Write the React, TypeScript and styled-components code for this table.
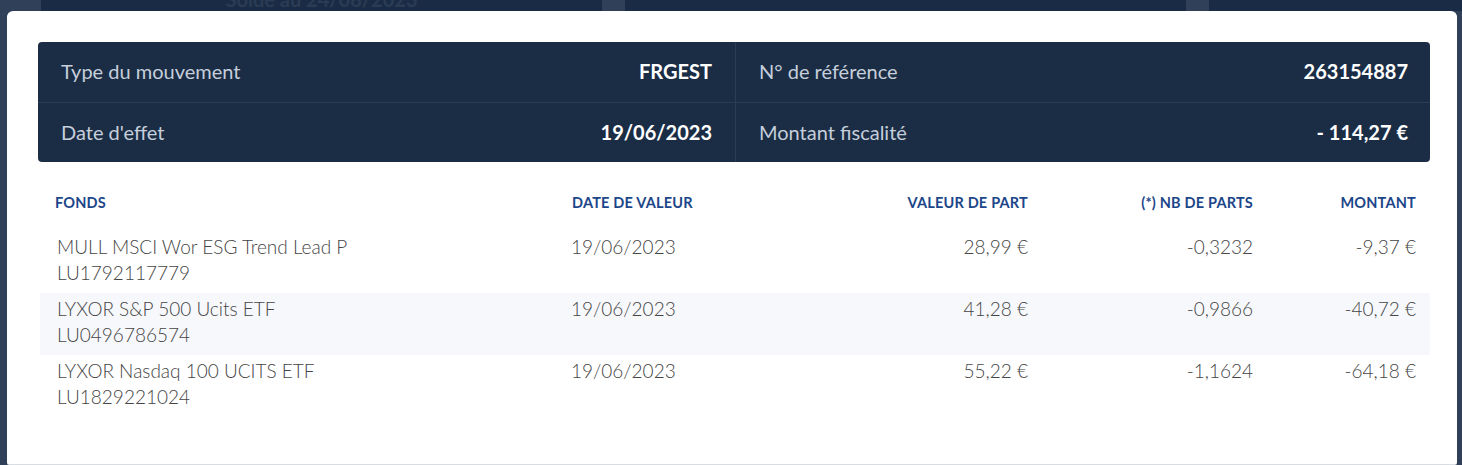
import styled, { createGlobalStyle } from 'styled-components';

type Fund = {
  name: string;
  isin: string;
  date: string;
  unitValue: string;
  units: string;
  amount: string;
};

const funds: Fund[] = [
  {
    name: 'MULL MSCI Wor ESG Trend Lead P',
    isin: 'LU1792117779',
    date: '19/06/2023',
    unitValue: '28,99 €',
    units: '-0,3232',
    amount: '-9,37 €'
  },
  {
    name: 'LYXOR S&P 500 Ucits ETF',
    isin: 'LU0496786574',
    date: '19/06/2023',
    unitValue: '41,28 €',
    units: '-0,9866',
    amount: '-40,72 €'
  },
  {
    name: 'LYXOR Nasdaq 100 UCITS ETF',
    isin: 'LU1829221024',
    date: '19/06/2023',
    unitValue: '55,22 €',
    units: '-1,1624',
    amount: '-64,18 €'
  }
];

export default function App() {
  return (
    <>
      <GlobalStyle />
      <Backdrop>
        <CardStrip>
          <BackCard>
            <BackCardTitle>Solde au 24/08/2023</BackCardTitle>
          </BackCard>
          <BackCard />
          <BackCard />
        </CardStrip>
        <Modal>
          <SummaryPanel>
            <SummaryCell>
              <SummaryLabel>Type du mouvement</SummaryLabel>
              <SummaryValue>FRGEST</SummaryValue>
            </SummaryCell>
            <SummaryCell $right>
              <SummaryLabel>N° de référence</SummaryLabel>
              <SummaryValue>263154887</SummaryValue>
            </SummaryCell>
            <SummaryCell $bottom>
              <SummaryLabel>Date d'effet</SummaryLabel>
              <SummaryValue>19/06/2023</SummaryValue>
            </SummaryCell>
            <SummaryCell $right $bottom>
              <SummaryLabel>Montant fiscalité</SummaryLabel>
              <SummaryValue>- 114,27 €</SummaryValue>
            </SummaryCell>
          </SummaryPanel>

          <FundTable>
            <HeadRow>
              <HeadCell>Fonds</HeadCell>
              <HeadCell>Date de valeur</HeadCell>
              <HeadCell $align="right">Valeur de part</HeadCell>
              <HeadCell $align="right">(*) Nb de parts</HeadCell>
              <HeadCell $align="right">Montant</HeadCell>
            </HeadRow>
            {funds.map((fund, index) => (
              <BodyRow key={fund.isin} $striped={index % 2 === 1}>
                <BodyCell $first>
                  {fund.name}
                  <br />
                  {fund.isin}
                </BodyCell>
                <BodyCell>{fund.date}</BodyCell>
                <BodyCell $align="right">{fund.unitValue}</BodyCell>
                <BodyCell $align="right">{fund.units}</BodyCell>
                <BodyCell $align="right">{fund.amount}</BodyCell>
              </BodyRow>
            ))}
          </FundTable>
        </Modal>
      </Backdrop>
    </>
  );
}

const GlobalStyle = createGlobalStyle`
  html, body {
    margin: 0;
    padding: 0;
    background: #2f4058;
    overflow: hidden;
  }

  body {
    font-family: Lato, "Open Sans", sans-serif;
  }
`;

const Backdrop = styled.div`
  width: 1462px;
  height: 465px;
  display: flex;
  flex-direction: column;
  background: #2f4058;
  overflow: hidden;
`;

const CardStrip = styled.div`
  height: 11px;
  flex: none;
  display: grid;
  grid-template-columns: 561px 561px 1fr;
  gap: 23px;
  padding-left: 41px;
  overflow: hidden;
`;

const BackCard = styled.div`
  background: #1a2c45;
  display: flex;
  justify-content: center;
`;

const BackCardTitle = styled.div`
  margin-top: -13px;
  font-size: 20px;
  font-weight: 700;
  color: #2a3c54;
  white-space: nowrap;
`;

const Modal = styled.div`
  flex: none;
  height: 453px;
  margin: 0 5px 0 7px;
  background: #ffffff;
  border-radius: 6px 6px 2px 2px;
  box-shadow: 0 1px 0 #d9dce1;
  padding: 31px 27px 0 31px;
  box-sizing: border-box;
`;

const SummaryPanel = styled.div`
  display: grid;
  grid-template-columns: 697px 1fr;
  grid-template-rows: 60px 60px;
  background: #1b2d45;
  border-radius: 4px;
`;

const SummaryCell = styled.div<{ $right?: boolean; $bottom?: boolean }>`
  display: flex;
  align-items: center;
  justify-content: space-between;
  padding: ${({ $right }) => ($right ? '0 22px 2px 23px' : '0 23px 2px 23px')};
  border-left: ${({ $right }) => ($right ? '1px solid #2b3d55' : 'none')};
  border-top: ${({ $bottom }) => ($bottom ? '1px solid #2b3d55' : 'none')};
`;

const SummaryLabel = styled.span`
  font-size: 20px;
  color: #c6cfdb;
`;

const SummaryValue = styled.span`
  font-size: 20px;
  font-weight: 700;
  color: #ffffff;
`;

const FundTable = styled.div`
  margin: 22px 0 0 2px;
  display: flex;
  flex-direction: column;
`;

const columns = '517px 243px 242px 225px 1fr';

const HeadRow = styled.div`
  display: grid;
  grid-template-columns: ${columns};
  padding: 12px 0 21px;
`;

const HeadCell = styled.div<{ $align?: 'left' | 'right' }>`
  padding: 0 14px 0 15px;
  text-align: ${({ $align }) => $align ?? 'left'};
  font-size: 14.5px;
  line-height: 14px;
  letter-spacing: 0.2px;
  font-weight: 700;
  text-transform: uppercase;
  color: #1c4689;
`;

const BodyRow = styled.div<{ $striped: boolean }>`
  display: grid;
  grid-template-columns: ${columns};
  padding: 3px 0 7px;
  background: ${({ $striped }) => ($striped ? '#f7f8fc' : 'transparent')};
`;

const BodyCell = styled.div<{ $align?: 'left' | 'right'; $first?: boolean }>`
  padding: ${({ $first }) => ($first ? '0 14px 0 17px' : '0 14px 0 14px')};
  text-align: ${({ $align }) => $align ?? 'left'};
  font-size: 19px;
  line-height: 26px;
  font-weight: 300;
  color: #454545;
`;
